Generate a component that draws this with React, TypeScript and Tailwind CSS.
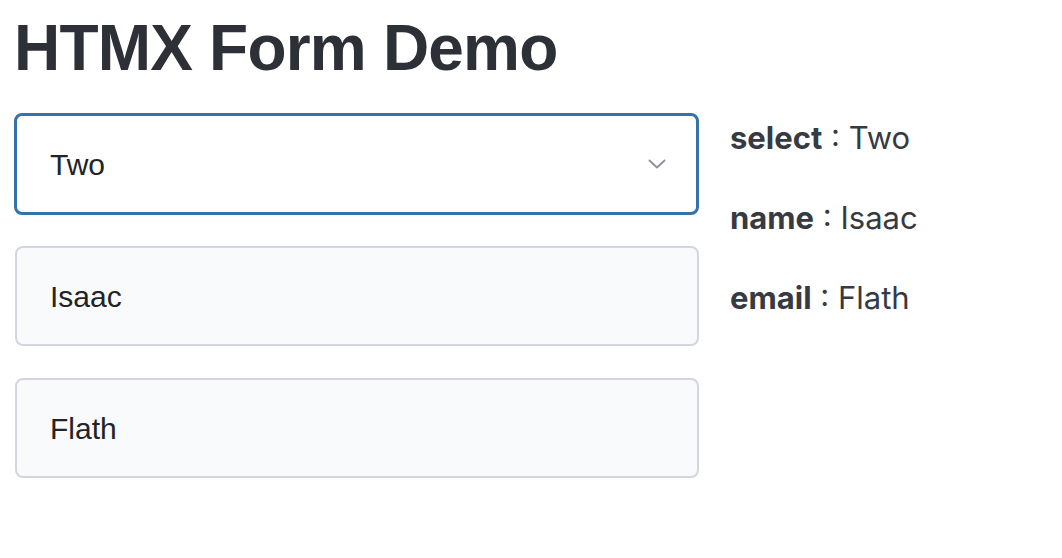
export default function App() {
  const fields = [
    { key: 'select', value: 'Two' },
    { key: 'name', value: 'Isaac' },
    { key: 'email', value: 'Flath' },
  ];

  return (
    <div className="min-h-screen bg-white pl-[14px]">
      <h1 className="pt-[16px] font-['Liberation_Sans',Arial,sans-serif] text-[64px] leading-[64px] font-bold tracking-[-0.8px] text-[#2d3037]">
        HTMX Form Demo
      </h1>

      <div className="mt-[33px] flex items-start">
        {/* form column */}
        <div className="flex w-[685px] flex-col font-['Liberation_Sans',Arial,sans-serif] text-[30px] text-[#212327]">
          <div className="flex h-[102px] items-center justify-between rounded-[8px] border-[3px] border-[#3572a9] bg-white pl-[33px] pr-[30px]">
            <span>Two</span>
            <svg width="18" height="10" viewBox="0 0 18 10" fill="none">
              <path d="M1.5 1.5 L9 8.5 L16.5 1.5" stroke="#8e94a0" strokeWidth="2" strokeLinecap="round" strokeLinejoin="round" />
            </svg>
          </div>
          <div className="mt-[31px] ml-px flex h-[100px] items-center rounded-[8px] border-2 border-[#d3d6de] bg-[#f9fafb] pl-[33px]">
            Isaac
          </div>
          <div className="mt-[32px] ml-px flex h-[100px] items-center rounded-[8px] border-2 border-[#d3d6de] bg-[#f9fafb] pl-[33px]">
            Flath
          </div>
        </div>

        {/* echoed values */}
        <div className="ml-[31px] flex flex-col gap-[30px] font-['Inter',sans-serif] text-[31px] leading-[50px] text-[#363a42]">
          {fields.map((f) => (
            <p key={f.key}>
              <span className="font-bold">{f.key}</span> : {f.value}
            </p>
          ))}
        </div>
      </div>
    </div>
  );
}
